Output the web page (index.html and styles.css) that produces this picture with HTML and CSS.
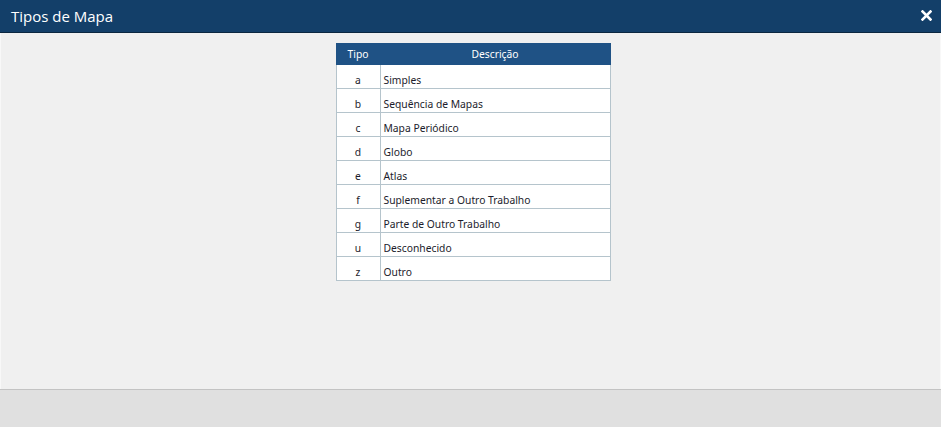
FILE: index.html
```html
<!DOCTYPE html>
<html lang="pt">
<head>
<meta charset="utf-8">
<title>Tipos de Mapa</title>
<link rel="stylesheet" href="styles.css">
</head>
<body>
<div class="dialog">
  <header class="titlebar">
    <h1 class="title">Tipos de Mapa</h1>
    <button class="close" aria-label="Fechar">
      <svg width="11" height="11" viewBox="0 0 11 11"><path d="M1.5 1.5 L9.5 9.5 M9.5 1.5 L1.5 9.5" stroke="#fff" stroke-width="2.6" stroke-linecap="square"/></svg>
    </button>
  </header>
  <main class="content">
    <table class="types">
      <thead>
        <tr class="head"><th class="c1">Tipo</th><th class="c2">Descrição</th></tr>
      </thead>
      <tbody>
        <tr><td class="c1">a</td><td class="c2">Simples</td></tr>
        <tr><td class="c1">b</td><td class="c2">Sequência de Mapas</td></tr>
        <tr><td class="c1">c</td><td class="c2">Mapa Periódico</td></tr>
        <tr><td class="c1">d</td><td class="c2">Globo</td></tr>
        <tr><td class="c1">e</td><td class="c2">Atlas</td></tr>
        <tr><td class="c1">f</td><td class="c2">Suplementar a Outro Trabalho</td></tr>
        <tr><td class="c1">g</td><td class="c2">Parte de Outro Trabalho</td></tr>
        <tr><td class="c1">u</td><td class="c2">Desconhecido</td></tr>
        <tr><td class="c1">z</td><td class="c2">Outro</td></tr>
      </tbody>
    </table>
  </main>
  <footer class="footer"></footer>
</div>
</body>
</html>
```
FILE: styles.css
```css
html, body {
  margin: 0;
  padding: 0;
  height: 100%;
}
body {
  background: #f0f0f0;
  font-family: "Open Sans", "Noto Sans", sans-serif;
}
.dialog {
  display: flex;
  flex-direction: column;
  height: 427px;
  width: 941px;
  box-sizing: border-box;
}
.titlebar {
  height: 32px;
  background: #133f69;
  border-bottom: 1px solid #0b2740;
  display: flex;
  align-items: center;
  justify-content: space-between;
  padding: 0 9px 0 11px;
  flex: none;
}
.title {
  margin: 0;
  color: #fff;
  font-size: 15px;
  font-weight: 400;
  line-height: 32px;
}
.close {
  background: none;
  border: 0;
  padding: 0;
  width: 11px;
  height: 11px;
  display: flex;
  margin-top: -2px;
}
.content {
  flex: 1;
  display: flex;
  justify-content: center;
  align-items: flex-start;
  padding-top: 10px;
  background: #f0f0f0;
  border-left: 1px solid #f8f8f8;
  border-right: 1px solid #f8f8f8;
}
.types {
  border-collapse: collapse;
  width: 275px;
  margin-left: 5px;
  font-family: "Noto Sans", "DejaVu Sans", sans-serif;
  font-size: 10.3px;
  line-height: 14px;
  color: #1c1c2c;
  background: #fff;
}
.types th {
  background: #1f5285;
  color: #fff;
  font-weight: 400;
  height: 20px;
  padding: 0;
  text-align: center;
  border: 1px solid #1f5285;
}
.types td {
  height: 16px;
  padding: 7px 0 0 0;
  vertical-align: middle;
  border: 1px solid #b5c4cc;
}
.types td.c1 {
  width: 43px;
  text-align: center;
}
.types th.c1 {
  width: 43px;
}
.types td.c2 {
  padding-left: 3px;
}
.footer {
  height: 37px;
  background: #e0e0e0;
  border-top: 1px solid #c3c3c3;
  flex: none;
}
```
